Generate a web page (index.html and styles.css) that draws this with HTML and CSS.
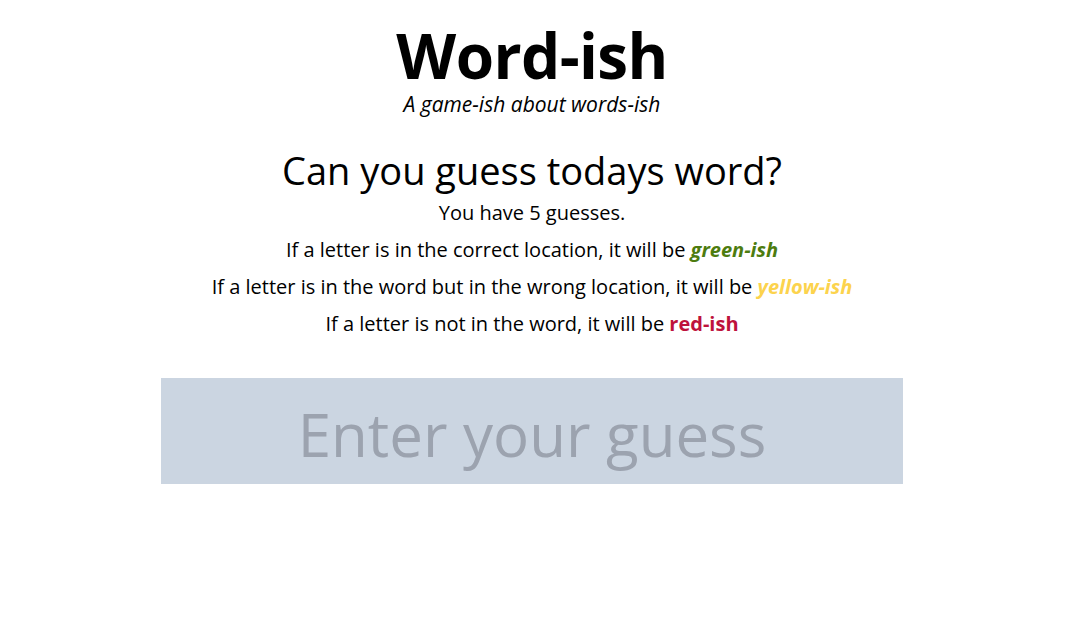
FILE: index.html
```html
<!DOCTYPE html>
<html lang="en">
<head>
<meta charset="utf-8">
<title>Word-ish</title>
<link rel="stylesheet" href="styles.css">
</head>
<body>
<main class="page">
  <header class="masthead">
    <h1 class="title">Word-ish</h1>
    <p class="tagline">A game-ish about words-ish</p>
  </header>
  <section class="rules">
    <h2 class="question">Can you guess todays word?</h2>
    <p class="rule">You have 5 guesses.</p>
    <p class="rule">If a letter is in the correct location, it will be <em class="hint green">green-ish</em></p>
    <p class="rule">If a letter is in the word but in the wrong location, it will be <em class="hint yellow">yellow-ish</em></p>
    <p class="rule">If a letter is not in the word, it will be <strong class="hint red">red-ish</strong></p>
  </section>
  <input class="guess" type="text" placeholder="Enter your guess">
</main>
</body>
</html>
```

FILE: styles.css
```css
html, body {
  margin: 0;
  padding: 0;
  background: #ffffff;
}
body {
  font-family: "Open Sans", "Noto Sans", sans-serif;
  color: #000000;
}
.page {
  width: 1064px;
  display: flex;
  flex-direction: column;
  align-items: center;
}
.masthead {
  display: flex;
  flex-direction: column;
  align-items: center;
  padding-top: 21px;
}
.title {
  margin: 0;
  font-size: 62px;
  font-weight: 700;
  line-height: 69px;
  letter-spacing: -0.6px;
}
.tagline {
  margin: 0;
  font-size: 21px;
  font-style: italic;
  line-height: 28px;
}
.rules {
  display: flex;
  flex-direction: column;
  align-items: center;
  margin-top: 28px;
}
.question {
  margin: 0;
  font-size: 38px;
  font-weight: 400;
  line-height: 48px;
}
.rule {
  margin: 0;
  font-size: 20px;
  line-height: 37px;
}
.hint {
  font-weight: 700;
  font-style: italic;
}
.hint.red { font-style: normal; }
.green { color: #4d7c0f; }
.yellow { color: #fcd34d; }
.red { color: #be123c; }
.guess {
  margin-top: 36px;
  width: 742px;
  height: 106px;
  box-sizing: border-box;
  border: none;
  outline: none;
  background: #cbd5e1;
  font-family: "Open Sans", "Noto Sans", sans-serif;
  font-size: 60px;
  text-align: center;
  color: #000;
  padding: 5px 0 0;
}
.guess::placeholder {
  color: #9ca3af;
  opacity: 1;
}
```
